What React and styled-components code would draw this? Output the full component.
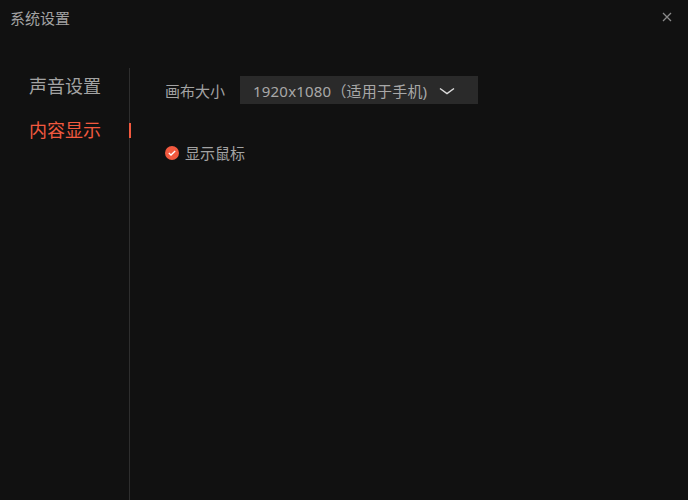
import React, { useState } from 'react'
import styled, { createGlobalStyle } from 'styled-components'

const GlobalStyle = createGlobalStyle`
    body {
        margin: 0;
        background: #111111;
        font-family: 'Noto Sans', 'Noto Sans CJK SC', sans-serif;
    }
`

const menu = ['声音设置', '内容显示']

const App = () => {
    const [active, setActive] = useState(1)
    const [showCursor, setShowCursor] = useState(true)

    return (
        <Window>
            <GlobalStyle />
            <Header>
                <Title>系统设置</Title>
                <CloseButton aria-label="close">
                    <svg width="10" height="10" viewBox="0 0 10 10">
                        <path d="M1 1 L9 9 M9 1 L1 9" stroke="#8a8a8a" strokeWidth="1.3" />
                    </svg>
                </CloseButton>
            </Header>
            <Body>
                <Sidebar>
                    {menu.map((name, i) => (
                        <MenuItem key={name} $active={i === active} onClick={() => setActive(i)}>
                            {name}
                            {i === active && <Indicator />}
                        </MenuItem>
                    ))}
                </Sidebar>
                <Content>
                    <Row>
                        <Label>画布大小</Label>
                        <Select>
                            <span>1920x1080（适用于手机)</span>
                            <svg width="16" height="8" viewBox="0 0 16 8">
                                <path d="M1 1.5 L8 6.5 L15 1.5" fill="none" stroke="#dcdcdc" strokeWidth="1.5" />
                            </svg>
                        </Select>
                    </Row>
                    <CheckRow onClick={() => setShowCursor(!showCursor)}>
                        <CheckCircle $checked={showCursor}>
                            {showCursor && (
                                <svg width="8" height="6" viewBox="0 0 8 6">
                                    <path d="M0.8 3 L3 5 L7.2 1" fill="none" stroke="#fff" strokeWidth="1.3" />
                                </svg>
                            )}
                        </CheckCircle>
                        <Label>显示鼠标</Label>
                    </CheckRow>
                </Content>
            </Body>
        </Window>
    )
}

const Window = styled.div`
    width: 688px;
    height: 500px;
    background: #111111;
    display: flex;
    flex-direction: column;
    overflow: hidden;
`

const Header = styled.div`
    height: 36px;
    display: flex;
    align-items: center;
    justify-content: space-between;
    padding: 0 16px 0 10px;
    margin-bottom: 32px;
`

const Title = styled.div`
    color: #a3a3a3;
    font-size: 15px;
    margin-top: -1px;
`

const CloseButton = styled.button`
    border: none;
    background: transparent;
    padding: 0;
    width: 10px;
    height: 10px;
    display: flex;
    cursor: pointer;
    margin-top: -3px;
`

const Body = styled.div`
    flex: 1;
    display: flex;
`

const Sidebar = styled.div`
    width: 129px;
    border-right: 1px solid #2e2e2e;
    display: flex;
    flex-direction: column;
    gap: 8px;
`

const MenuItem = styled.div`
    position: relative;
    height: 36px;
    line-height: 36px;
    padding-left: 29px;
    font-size: 18px;
    color: ${(p) => (p.$active ? '#f2593f' : '#a3a3a3')};
    cursor: pointer;
`

const Indicator = styled.div`
    position: absolute;
    right: -2px;
    top: 11px;
    width: 2px;
    height: 15px;
    background: #f2593f;
`

const Content = styled.div`
    flex: 1;
    padding: 8px 0 0 35px;
    display: flex;
    flex-direction: column;
    gap: 38px;
`

const Row = styled.div`
    display: flex;
    align-items: center;
    gap: 15px;
`

const Label = styled.span`
    font-size: 15px;
    color: #a3a3a3;
`

const Select = styled.div`
    width: 238px;
    height: 28px;
    box-sizing: border-box;
    background: #2a2a2a;
    padding-left: 13px;
    display: flex;
    align-items: center;
    gap: 12px;
    font-size: 15px;
    color: #a8a8a8;
    cursor: pointer;

    span {
        letter-spacing: 0.2px;
    }

    svg {
        margin-top: 1px;
    }
`

const CheckRow = styled.div`
    display: flex;
    align-items: center;
    gap: 6px;
    cursor: pointer;
`

const CheckCircle = styled.div`
    width: 14px;
    height: 14px;
    border-radius: 50%;
    background: ${(p) => (p.$checked ? '#f2593f' : 'transparent')};
    border: ${(p) => (p.$checked ? 'none' : '1px solid #666')};
    display: flex;
    align-items: center;
    justify-content: center;
`

export default App
